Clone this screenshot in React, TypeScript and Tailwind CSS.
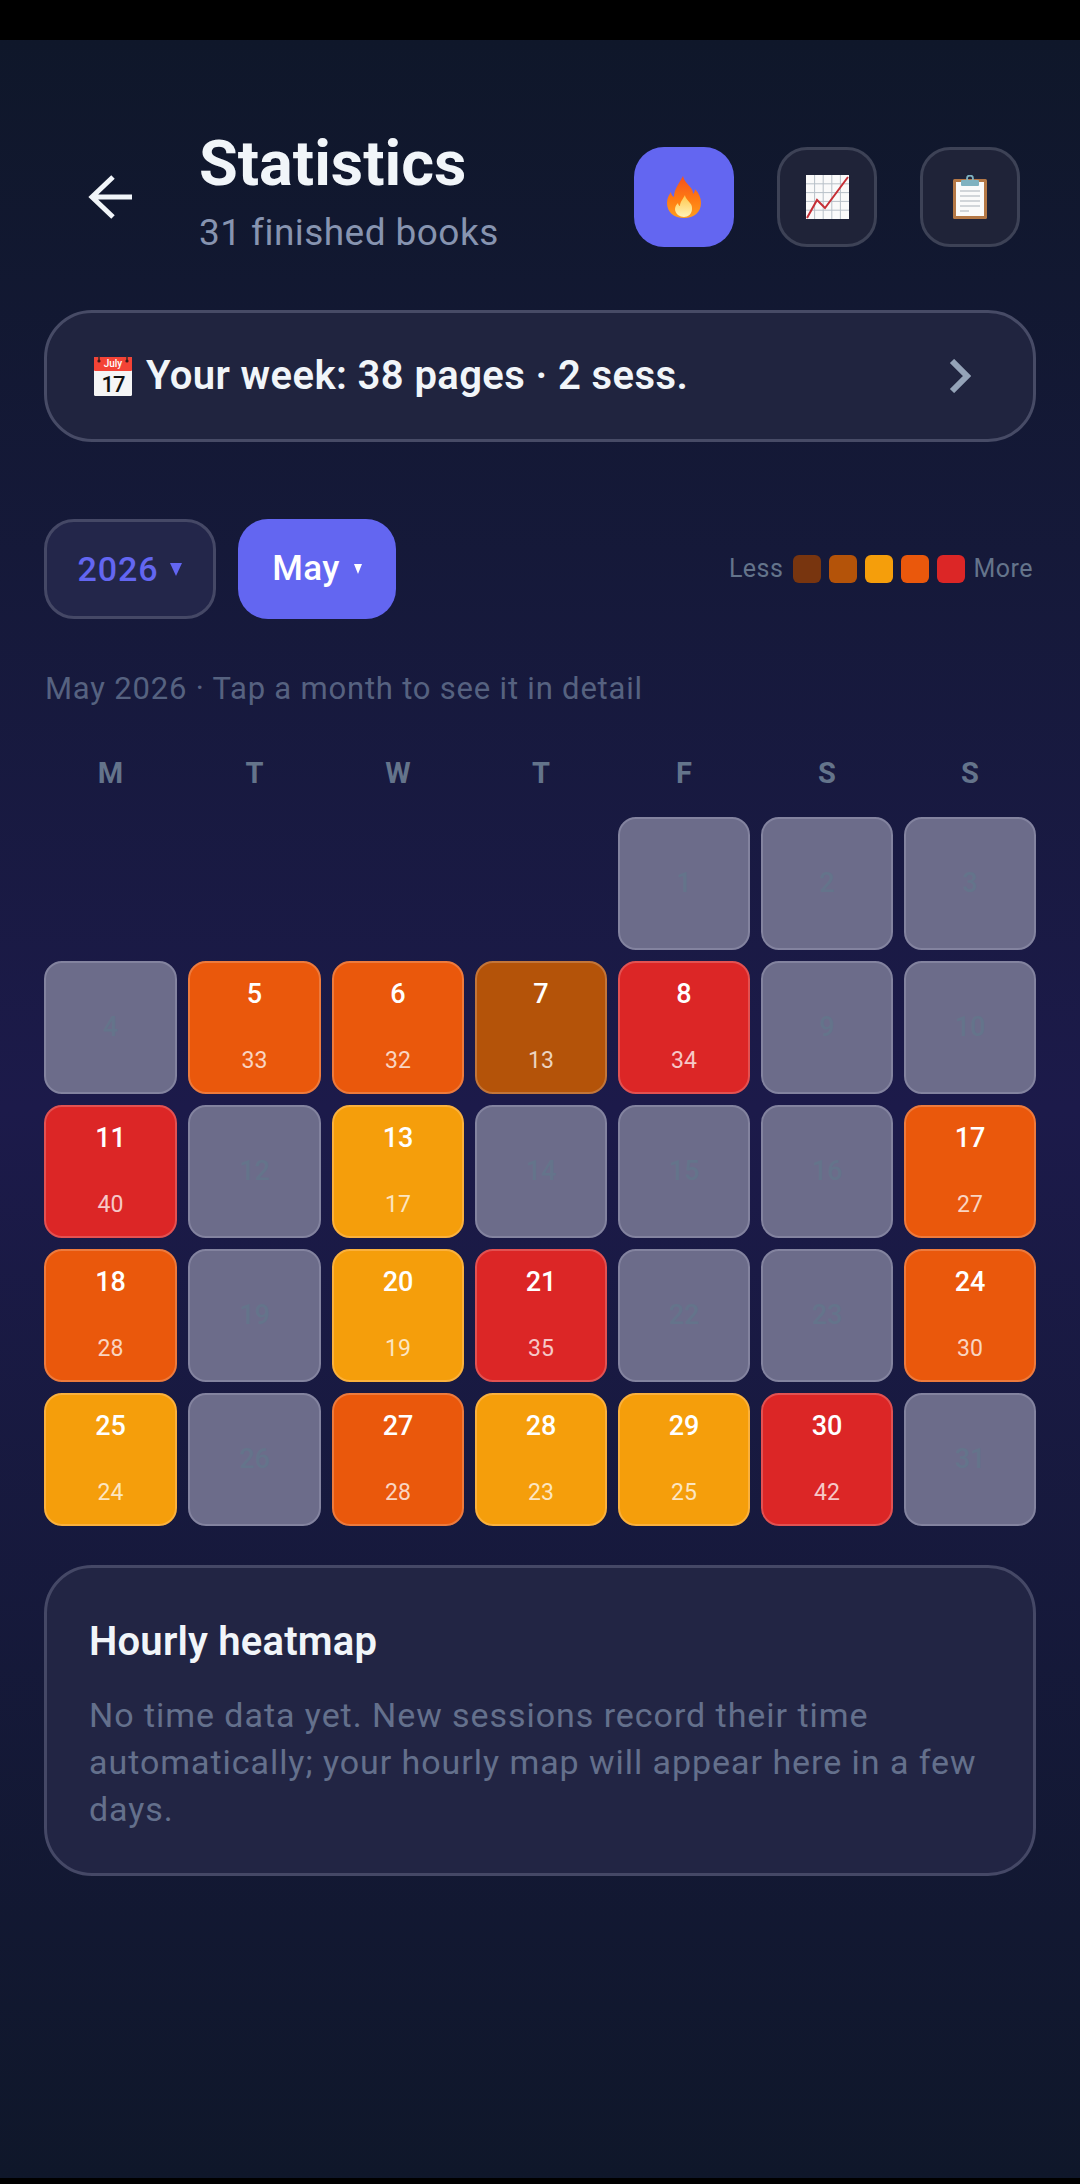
const weekDays = ["M", "T", "W", "T", "F", "S", "S"];

const levels: Record<string, string> = {
  amber: "bg-[#f59e0b] border-[#fbb13c]",
  orange: "bg-[#ea580c] border-[#ee7a3c]",
  red: "bg-[#dc2626] border-[#e35151]",
  brown: "bg-[#b45309] border-[#c37539]",
};

type Day = { day: number; pages?: number; level?: string };

const days: Day[] = [
  { day: 1 },
  { day: 2 },
  { day: 3 },
  { day: 4 },
  { day: 5, pages: 33, level: "orange" },
  { day: 6, pages: 32, level: "orange" },
  { day: 7, pages: 13, level: "brown" },
  { day: 8, pages: 34, level: "red" },
  { day: 9 },
  { day: 10 },
  { day: 11, pages: 40, level: "red" },
  { day: 12 },
  { day: 13, pages: 17, level: "amber" },
  { day: 14 },
  { day: 15 },
  { day: 16 },
  { day: 17, pages: 27, level: "orange" },
  { day: 18, pages: 28, level: "orange" },
  { day: 19 },
  { day: 20, pages: 19, level: "amber" },
  { day: 21, pages: 35, level: "red" },
  { day: 22 },
  { day: 23 },
  { day: 24, pages: 30, level: "orange" },
  { day: 25, pages: 24, level: "amber" },
  { day: 26 },
  { day: 27, pages: 28, level: "orange" },
  { day: 28, pages: 23, level: "amber" },
  { day: 29, pages: 25, level: "amber" },
  { day: 30, pages: 42, level: "red" },
  { day: 31 },
];

function CalendarEmoji() {
  return (
    <svg width="38" height="40" viewBox="0 0 38 40" className="shrink-0">
      <rect x="0" y="1" width="38" height="39" rx="1.5" fill="#f5f5f5" />
      <rect x="0" y="1" width="38" height="14" rx="1" fill="#f44336" />
      <path d="M5 0v5M33 0v5" stroke="#3a2a2a" strokeWidth="1.5" />
      <circle cx="5" cy="5" r="1.6" fill="#3a1a1a" />
      <circle cx="33" cy="5" r="1.6" fill="#3a1a1a" />
      <text x="19" y="11" textAnchor="middle" fontSize="10" fontWeight="500" fill="#fff" fontFamily="Roboto, sans-serif">
        July
      </text>
      <text x="19" y="36" textAnchor="middle" fontSize="22" fontWeight="500" letterSpacing="-1" fill="#111" fontFamily="Roboto, sans-serif">
        17
      </text>
    </svg>
  );
}

function FlameEmoji() {
  return (
    <svg width="36" height="44" viewBox="0 0 36 44">
      <defs>
        <linearGradient id="flameOuter" x1="0" y1="0" x2="0" y2="1">
          <stop offset="0" stopColor="#f4511e" />
          <stop offset="0.55" stopColor="#ff7a12" />
          <stop offset="1" stopColor="#ff9d1e" />
        </linearGradient>
        <linearGradient id="flameInner" x1="0" y1="0" x2="0" y2="1">
          <stop offset="0" stopColor="#ffc64a" />
          <stop offset="1" stopColor="#fff3b8" />
        </linearGradient>
      </defs>
      <path
        d="M17 1c1 5 5 8 8 12 1.500 2 2 4 2 6 1-1 2-3 2-5 4 4 6 9 6 14 0 9-7 15-17 15S1 37 1 28c0-5 2-8 4-11 0 2 1 4 3 5 0-8 5-13 9-21z"
        fill="url(#flameOuter)"
      />
      <path
        d="M19 20c0 3 3 5 5 8 2 2 2 4 2 6 0 5-4 8-8 8s-9-3-9-8c0-3 2-5 3-6 0 1 1 3 2 3 0-4 3-7 5-11z"
        fill="url(#flameInner)"
      />
    </svg>
  );
}

function ChartEmoji() {
  const lines = [1, 2, 3, 4];
  return (
    <svg width="43" height="44" viewBox="0 0 43 44">
      <rect x="0" y="0" width="43" height="44" fill="#fafafa" />
      {lines.map((n) => (
        <path key={n} d={`M${n * 8.6} 0v44`} stroke="#b8c0c8" strokeWidth="1" />
      ))}
      {lines.map((n) => (
        <path key={n} d={`M0 ${n * 8.8}h43`} stroke="#b8c0c8" strokeWidth="1" />
      ))}
      <path d="M1 43 L11 25 L19 33 L42 2" fill="none" stroke="#c62f36" strokeWidth="2" />
    </svg>
  );
}

function ClipboardEmoji() {
  const rows = [16, 21, 26, 31];
  return (
    <svg width="34" height="44" viewBox="0 0 34 44">
      <rect x="0" y="4" width="34" height="40" rx="1.5" fill="#b47846" />
      <rect x="3" y="7" width="28" height="34" fill="#fafafa" />
      {rows.map((y) => (
        <path key={y} d={`M7 ${y}h20`} stroke="#a8b0b8" strokeWidth="1" />
      ))}
      <path d="M7 36h9" stroke="#a8b0b8" strokeWidth="1" />
      <rect x="8" y="5" width="18" height="6" rx="1" fill="#7fb2c0" />
      <circle cx="17" cy="3.500" r="3" fill="none" stroke="#7fb2c0" strokeWidth="1.800" />
    </svg>
  );
}

function Cell({ item }: { item: Day }) {
  if (!item.level) {
    return (
      <div className="h-[133px] rounded-[18px] border-2 border-[#83839f] bg-[#6c6c8a] flex items-center justify-center text-[27px] font-medium text-[#64748b]">
        {item.day}
      </div>
    );
  }
  return (
    <div className={`h-[133px] rounded-[18px] border-2 ${levels[item.level]} flex flex-col items-center pt-[14px] pb-[17px] justify-between`}>
      <span className="text-[27px] leading-[34px] font-medium text-white">{item.day}</span>
      <span className="text-[23px] leading-[28px] text-white/75">{item.pages}</span>
    </div>
  );
}

export default function App() {
  return (
    <div className="w-[1080px] h-[2184px] bg-black flex flex-col font-['Roboto',sans-serif]">
      <div className="h-10 shrink-0" />
      <main className="flex-1 bg-gradient-to-b from-[#0f172a] via-[#1c1a4a] to-[#0f172a] px-[44px] pt-[107px]">
        {/* Header */}
        <header className="flex items-center h-[100px] pr-[16px]">
          <button className="w-[155px] h-[100px] flex items-center pl-[44px] shrink-0">
            <svg width="44" height="44" viewBox="0 0 44 44" fill="none" stroke="#f1f5f9" strokeWidth="5">
              <path d="M44 22H4M25 2 4 22 25 42" />
            </svg>
          </button>
          <div className="flex-1 mt-[2px]">
            <h1 className="text-[63px] leading-[68px] font-bold text-[#f1f5f9]">Statistics</h1>
            <p className="text-[37px] leading-[69px] tracking-[0.45px] text-[#8794b0]">31 finished books</p>
          </div>
          <div className="flex gap-[43px]">
            <button className="w-[100px] h-[100px] rounded-[30px] bg-[#6366f1] flex items-center justify-center">
              <FlameEmoji />
            </button>
            <button className="w-[100px] h-[100px] rounded-[30px] bg-[#1f2338] border-[3px] border-[#3d4256] flex items-center justify-center">
              <ChartEmoji />
            </button>
            <button className="w-[100px] h-[100px] rounded-[30px] bg-[#1f2338] border-[3px] border-[#3d4256] flex items-center justify-center">
              <ClipboardEmoji />
            </button>
          </div>
        </header>

        {/* Week summary */}
        <div className="mt-[63px] h-[132px] rounded-[48px] bg-[#20243f] border-[3px] border-[#474b66] flex items-center justify-between pl-[47px] pr-[62px]">
          <div className="flex items-center gap-[14px]">
            <CalendarEmoji />
            <span className="text-[40px] font-semibold tracking-[0.4px] text-[#f1f5f9]">Your week: 38 pages · 2 sess.</span>
          </div>
          <svg width="22" height="34" viewBox="0 0 22 34" fill="none" stroke="#94a3b8" strokeWidth="6">
            <path d="M3 2 18 17 3 32" />
          </svg>
        </div>

        {/* Filters and legend */}
        <div className="mt-[77px] flex items-center justify-between pr-[3px]">
          <div className="flex gap-[22px]">
            <button className="w-[172px] h-[100px] rounded-[30px] bg-[#23264a] border-[3px] border-[#454866] flex items-center justify-center gap-[12px] text-[34px] font-medium tracking-[0.9px] text-[#6366f1]">
              2026
              <span className="w-0 h-0 border-x-[6px] border-x-transparent border-t-[13px] border-t-[#6366f1]" />
            </button>
            <button className="w-[158px] h-[100px] rounded-[30px] bg-[#6366f1] flex items-center justify-center gap-[14px] text-[35px] font-medium tracking-[0.4px] text-white">
              May
              <span className="w-0 h-0 border-x-[4.500px] border-x-transparent border-t-[10px] border-t-white" />
            </button>
          </div>
          <div className="flex items-center gap-[8px] text-[25px] tracking-[0.5px] text-[#64748b]">
            <span className="mr-[2px]">Less</span>
            <span className="w-[28px] h-[28px] rounded-[6px] bg-[#78350f]" />
            <span className="w-[28px] h-[28px] rounded-[6px] bg-[#b45309]" />
            <span className="w-[28px] h-[28px] rounded-[6px] bg-[#f59e0b]" />
            <span className="w-[28px] h-[28px] rounded-[6px] bg-[#ea580c]" />
            <span className="w-[28px] h-[28px] rounded-[6px] bg-[#dc2626]" />
            <span>More</span>
          </div>
        </div>

        <p className="mt-[50px] pl-[1px] text-[31px] leading-[40px] tracking-[0.8px] text-[#566280]">
          May 2026 · Tap a month to see it in detail
        </p>

        {/* Calendar */}
        <div className="mt-[46px] grid grid-cols-[133px_133px_132px_132px_132px_132px_132px] gap-[11px] text-center text-[29px] leading-[36px] font-bold text-[#64748b]">
          {weekDays.map((d, i) => (
            <div key={i}>{d}</div>
          ))}
        </div>
        <div className="mt-[26px] grid grid-cols-[133px_133px_132px_132px_132px_132px_132px] gap-[11px]">
          {days.map((item) => (
            <div key={item.day} className={item.day === 1 ? "col-start-5" : ""}>
              <Cell item={item} />
            </div>
          ))}
        </div>

        {/* Hourly heatmap */}
        <section className="mt-[39px] h-[311px] rounded-[48px] bg-[#222544] border-[3px] border-[#454866] px-[42px] pt-[50px]">
          <h2 className="text-[40px] leading-[48px] font-semibold tracking-[0.2px] text-[#f1f5f9]">Hourly heatmap</h2>
          <p className="mt-[26px] text-[34px] leading-[47px] tracking-[0.95px] text-[#64708c]">
            No time data yet. New sessions record their time automatically; your hourly map will appear here in a few days.
          </p>
        </section>
      </main>
      <div className="h-[6px] shrink-0" />
    </div>
  );
}
